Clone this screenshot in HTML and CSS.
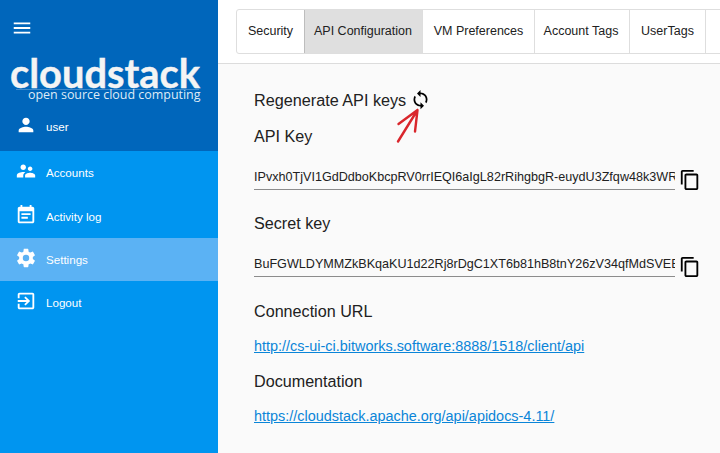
FILE: index.html
```html
<!DOCTYPE html>
<html lang="en">
<head>
<meta charset="utf-8">
<title>API Configuration</title>
<link rel="stylesheet" href="styles.css">
</head>
<body>
<div class="app">
  <aside class="sidebar">
    <header class="side-head">
      <svg class="icon menu" viewBox="0 0 24 24"><path d="M3 18h18v-2H3v2zm0-5h18v-2H3v2zm0-7v2h18V6H3z"/></svg>
      <svg class="logo" viewBox="0 0 218 55" role="img">
        <path class="logo-line" d="M16 39.5H199"/>
        <text class="logo-name" x="10" y="38" textLength="190" lengthAdjust="spacingAndGlyphs">cloudstack</text>
        <text class="logo-tag" x="28" y="49.200" textLength="172.500" lengthAdjust="spacingAndGlyphs">open source cloud computing</text>
      </svg>
      <div class="user"><svg class="icon" viewBox="0 0 24 24"><path d="M12 12c2.21 0 4-1.790 4-4s-1.790-4-4-4-4 1.790-4 4 1.790 4 4 4zm0 2c-2.670 0-8 1.340-8 4v2h16v-2c0-2.660-5.330-4-8-4z"/></svg><span>user</span></div>
    </header>
    <nav class="nav">
      <a class="item"><svg class="icon" viewBox="0 0 24 24"><path d="M16.500 12c1.380 0 2.490-1.120 2.490-2.500S17.880 7 16.500 7 14 8.120 14 9.500s1.120 2.500 2.500 2.500zM9 11c1.660 0 2.990-1.340 2.990-3S10.660 5 9 5 6 6.340 6 8s1.340 3 3 3zm7.500 3c-1.830 0-5.500.920-5.500 2.750V19h11v-2.250c0-1.830-3.670-2.750-5.500-2.750zM9 13c-2.330 0-7 1.170-7 3.500V19h7v-2.250c0-.850.330-2.340 2.370-3.470C10.500 13.100 9.660 13 9 13z"/></svg><span>Accounts</span></a>
      <a class="item"><svg class="icon" viewBox="0 0 24 24"><path d="M17 10H7v2h10v-2zm2-7h-1V1h-2v2H8V1H6v2H5c-1.110 0-2 .9-2 2v14c0 1.100.89 2 2 2h14c1.100 0 2-.9 2-2V5c0-1.100-.9-2-2-2zm0 16H5V8h14v11zm-5-5H7v2h7v-2z"/></svg><span>Activity log</span></a>
      <a class="item active"><svg class="icon" viewBox="0 0 24 24"><path d="M12 15.500A3.500 3.500 0 0 1 8.500 12 3.500 3.500 0 0 1 12 8.500a3.500 3.500 0 0 1 3.500 3.500 3.500 3.500 0 0 1-3.500 3.500m7.430-2.530c.04-.32.07-.64.07-.97s-.03-.66-.07-1l2.110-1.630c.19-.15.24-.42.12-.64l-2-3.460c-.12-.22-.39-.31-.61-.22l-2.490 1c-.52-.39-1.060-.73-1.690-.98l-.37-2.650A.506.506 0 0 0 14 2h-4c-.25 0-.46.18-.5.42l-.37 2.650c-.63.25-1.170.59-1.690.98l-2.490-1c-.22-.09-.49 0-.61.22l-2 3.460c-.13.22-.07.49.12.64L4.570 11c-.04.34-.07.67-.07 1s.03.65.07.97l-2.110 1.660c-.19.15-.25.42-.12.64l2 3.460c.12.22.39.3.61.22l2.490-1.010c.52.4 1.060.74 1.690.99l.37 2.650c.04.24.25.42.5.42h4c.25 0 .46-.18.5-.42l.37-2.650c.63-.26 1.170-.59 1.690-.99l2.490 1.010c.22.08.49 0 .61-.22l2-3.460c.12-.22.07-.49-.12-.64z"/></svg><span>Settings</span></a>
      <a class="item"><svg class="icon" viewBox="0 0 24 24"><path d="M10.090 15.590 11.500 17l5-5-5-5-1.410 1.410L12.670 11H3v2h9.670zM19 3H5c-1.110 0-2 .9-2 2v4h2V5h14v14H5v-4H3v4c0 1.100.89 2 2 2h14c1.100 0 2-.9 2-2V5c0-1.100-.9-2-2-2z"/></svg><span>Logout</span></a>
    </nav>
  </aside>
  <main class="main">
    <div class="toolbar">
      <div class="tabs">
        <a class="tab t-security">Security</a>
        <a class="tab t-api selected">API Configuration</a>
        <a class="tab t-vm">VM Preferences</a>
        <a class="tab t-account">Account Tags</a>
        <a class="tab t-user">UserTags</a>
        <a class="tab t-rest"></a>
      </div>
    </div>
    <section class="content">
      <h3 class="regen">Regenerate API keys
        <svg class="sync" viewBox="0 0 24 24"><path d="M12 4V1L8 5l4 4V6c3.310 0 6 2.690 6 6 0 1.010-.25 1.970-.7 2.800l1.460 1.460C19.540 15.030 20 13.570 20 12c0-4.420-3.580-8-8-8zm0 14c-3.310 0-6-2.690-6-6 0-1.010.25-1.970.7-2.800L5.240 7.740C4.460 8.970 4 10.430 4 12c0 4.420 3.580 8 8 8v3l4-4-4-4v3z"/></svg>
        <svg class="pointer" viewBox="0 0 28 38"><path d="M2 34.500 21.500 3M2.500 17 21.500 3 19 24.500"/></svg>
      </h3>
      <h3 class="h-api">API Key</h3>
      <div class="field"><div class="value">IPvxh0TjVI1GdDdboKbcpRV0rrIEQI6aIgL82rRihgbgR-euydU3Zfqw48k3WR</div><svg class="copy" viewBox="0 0 24 24"><path d="M16 1H4c-1.100 0-2 .9-2 2v14h2V3h12V1zm3 4H8c-1.100 0-2 .9-2 2v14c0 1.100.9 2 2 2h11c1.100 0 2-.9 2-2V7c0-1.100-.9-2-2-2zm0 16H8V7h11v14z"/></svg></div>
      <h3 class="h-secret">Secret key</h3>
      <div class="field"><div class="value">BuFGWLDYMMZkBKqaKU1d22Rj8rDgC1XT6b81hB8tnY26zV34qfMdSVEE</div><svg class="copy" viewBox="0 0 24 24"><path d="M16 1H4c-1.100 0-2 .9-2 2v14h2V3h12V1zm3 4H8c-1.100 0-2 .9-2 2v14c0 1.100.9 2 2 2h11c1.100 0 2-.9 2-2V7c0-1.100-.9-2-2-2zm0 16H8V7h11v14z"/></svg></div>
      <h3 class="h-url">Connection URL</h3>
      <a class="link">http://cs-ui-ci.bitworks.software:8888/1518/client/api</a>
      <h3 class="h-doc">Documentation</h3>
      <a class="link">https://cloudstack.apache.org/api/apidocs-4.11/</a>
    </section>
  </main>
</div>
</body>
</html>
```
FILE: styles.css
```css
* { box-sizing: border-box; }
body {
  margin: 0;
  overflow: hidden;
  font-family: "Liberation Sans", Arial, sans-serif;
  color: #212121;
}
.app { display: flex; width: 720px; height: 453px; background: #fafafa; }

.sidebar { width: 218px; flex: none; background: #0095f0; color: #fff; }
.side-head { height: 151px; padding-top: 17px; background: #0066bb; }
.icon { display: block; width: 22px; height: 22px; flex: none; fill: #fff; }
.menu { margin-left: 11px; }
.logo { display: block; width: 218px; height: 55px; margin-top: 11px; overflow: visible; }
.logo-line { stroke: #3f8bcc; stroke-width: 1; }
.logo-name { font: 700 40px Lato, sans-serif; fill: #f4f4f4; stroke: #f4f4f4; stroke-width: .4; }
.logo-tag { font: 400 13.500px "Open Sans", sans-serif; fill: #dfebf6; }
.user { display: flex; height: 22px; margin-top: 9px; padding-left: 15px; gap: 9px; font-size: 11.600px; }
.user span { line-height: 26px; }
.nav { display: flex; flex-direction: column; }
.item { display: flex; height: 43px; padding: 9px 0 0 15px; gap: 9px; font-size: 11.600px; }
.item:nth-child(2) { height: 44px; padding-top: 10px; }
.item span { line-height: 26px; }
.item.active { background: #5bb2f4; }

.main { flex: 1; min-width: 0; }
.toolbar { height: 64px; padding: 9px 0 0 18px; background: #fff; border-bottom: 1px solid #dcdcdc; overflow: hidden; }
.tabs { display: flex; width: 560px; height: 45px; border: 1px solid #dedede; border-radius: 3px; }
.tab { flex: none; font-size: 12.500px; line-height: 42px; white-space: nowrap; text-align: center; border-right: 1px solid #dedede; }
.t-security { width: 68px; border-right-color: #bdbdbd; }
.t-api { width: 118px; padding-right: 1px; }
.t-vm { width: 112px; }
.t-account { width: 95px; padding-right: 2px; }
.t-user { width: 76px; }
.t-rest { flex: 1; }
.selected { background: #dfdfdf; }

.content { display: flex; flex-direction: column; align-items: flex-start; padding: 26px 0 0 36px; }
h3 { margin: 0; font-size: 16.150px; font-weight: 400; line-height: 20px; white-space: nowrap; }
.regen { position: relative; display: flex; gap: 4px; height: 20px; font-size: 16.220px; }
.sync { width: 21px; height: 21px; flex: none; margin-top: -1px; }
.pointer { position: absolute; left: 142px; top: 17px; width: 28px; height: 38px; fill: none; stroke: #d9262c; stroke-width: 2.400; stroke-linecap: round; stroke-linejoin: round; }
.h-api { margin-top: 16px; }
.field { display: flex; gap: 4px; height: 22px; margin-top: 23px; }
.value { width: 421px; height: 21px; overflow: hidden; white-space: nowrap; font-size: 12.600px; line-height: 16px; border-bottom: 1px solid #8c8c8c; }
.copy { width: 22px; height: 22px; }
.h-secret { margin-top: 22px; }
.h-url { margin-top: 23px; }
.link { margin-top: 16px; font-size: 14.430px; line-height: 18px; color: #0a85d8; text-decoration: underline; }
.h-doc { margin-top: 16px; }
```
